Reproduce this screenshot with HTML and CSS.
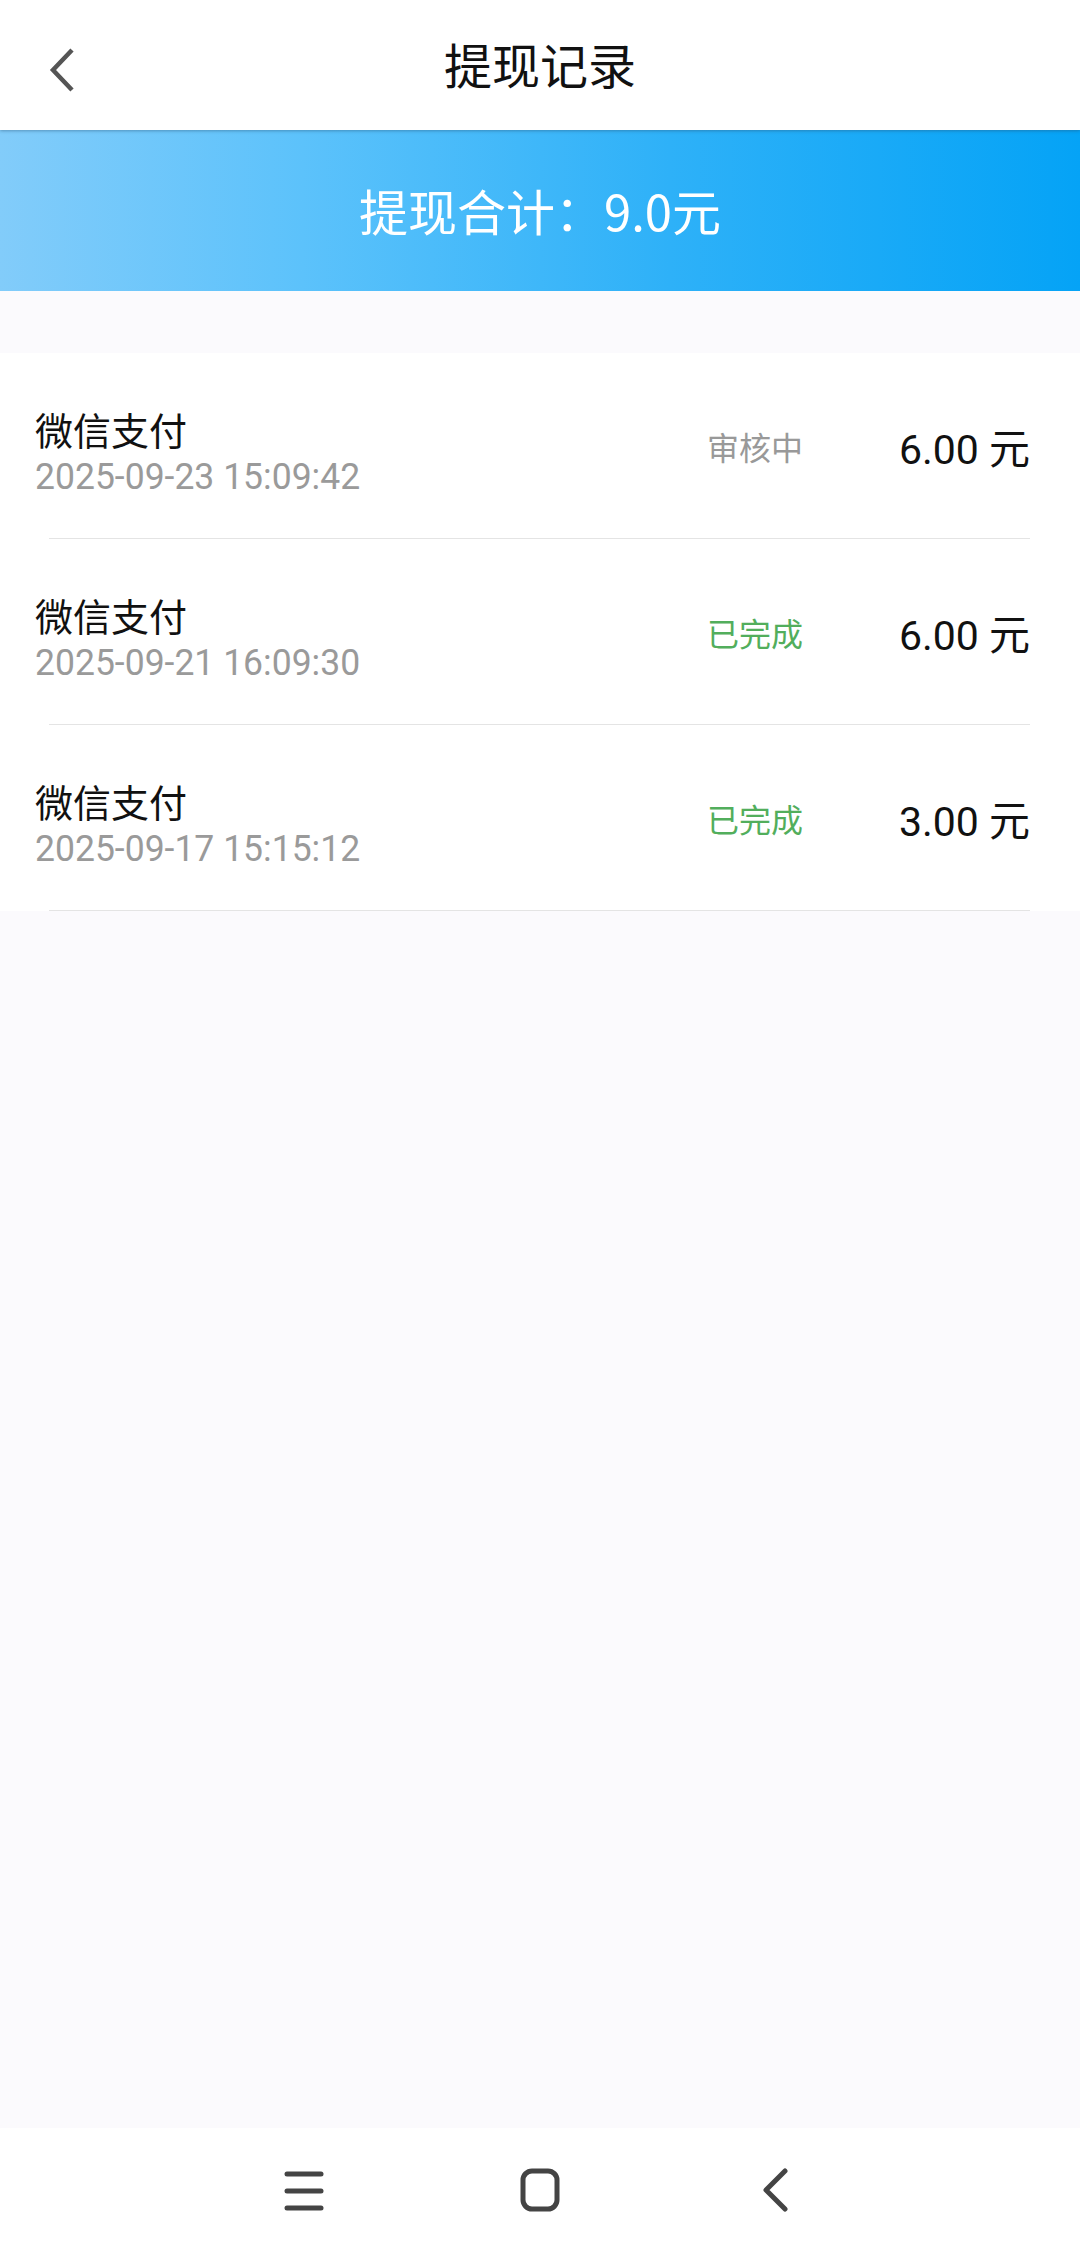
FILE: index.html
```html
<!DOCTYPE html>
<html lang="zh-CN">
<head>
<meta charset="utf-8">
<title>提现记录</title>
<link rel="stylesheet" href="styles.css">
</head>
<body>
<div class="page">
  <header class="topbar">
    <div class="back">
      <svg width="30" height="48" viewBox="0 0 30 48"><polyline points="24,4 5,24 24,44" fill="none" stroke="#555" stroke-width="4.5"/></svg>
    </div>
    <h1 class="title">提现记录</h1>
  </header>
  <section class="banner">提现合计：9.0元</section>
  <div class="spacer"></div>
  <ul class="list">
    <li class="item">
      <div class="row">
        <div class="info">
          <div class="name">微信支付</div>
          <div class="date"><span class="date-text">2025-09-23 15:09:42</span></div>
        </div>
        <div class="status pending">审核中</div>
        <div class="amount">6.00 元</div>
      </div>
      <div class="divider"></div>
    </li>
    <li class="item">
      <div class="row">
        <div class="info">
          <div class="name">微信支付</div>
          <div class="date"><span class="date-text">2025-09-21 16:09:30</span></div>
        </div>
        <div class="status done">已完成</div>
        <div class="amount">6.00 元</div>
      </div>
      <div class="divider"></div>
    </li>
    <li class="item">
      <div class="row">
        <div class="info">
          <div class="name">微信支付</div>
          <div class="date"><span class="date-text">2025-09-17 15:15:12</span></div>
        </div>
        <div class="status done">已完成</div>
        <div class="amount">3.00 元</div>
      </div>
      <div class="divider"></div>
    </li>
  </ul>
  <div class="filler"></div>
  <nav class="navbar">
    <div class="nav-slot">
      <svg width="44" height="44" viewBox="0 0 44 44"><g stroke="#444" stroke-width="5" stroke-linecap="round"><line x1="5" y1="5" x2="39" y2="5"/><line x1="5" y1="22" x2="39" y2="22"/><line x1="5" y1="39" x2="39" y2="39"/></g></svg>
    </div>
    <div class="nav-slot">
      <svg width="44" height="46" viewBox="0 0 44 46"><rect x="5" y="3" width="34" height="38" rx="9" fill="none" stroke="#444" stroke-width="5"/></svg>
    </div>
    <div class="nav-slot">
      <svg width="34" height="46" viewBox="0 0 34 46"><polyline points="26,3 7,22 26,41" fill="none" stroke="#444" stroke-width="5" stroke-linecap="round" stroke-linejoin="round"/></svg>
    </div>
  </nav>
</div>
</body>
</html>
```
FILE: styles.css
```css
* { box-sizing: border-box; }
html, body { margin: 0; padding: 0; }
body {
  width: 1080px;
  height: 2259px;
  background: #fbfafd;
  font-family: Roboto, "Noto Sans CJK SC", sans-serif;
  color: #111;
}
.page {
  display: flex;
  flex-direction: column;
  height: 2259px;
}
.topbar {
  height: 130px;
  background: #fff;
  display: flex;
  align-items: center;
  justify-content: center;
  position: relative;
  box-shadow: 0 1px 3px rgba(40, 80, 110, 0.45);
  z-index: 1;
}
.back {
  position: absolute;
  left: 48px;
  top: 46px;
  display: flex;
}
.title {
  margin: 0;
  font-family: "Noto Sans CJK SC", sans-serif;
  font-size: 48px;
  font-weight: 400;
  color: #111;
  line-height: 1;
  padding-bottom: 4px;
}
.banner {
  height: 161px;
  background: linear-gradient(90deg, #82ccfa 0%, #5cc2fb 28%, #2eb1f8 62%, #05a3f6 100%);
  color: #fff;
  font-family: "Noto Sans CJK SC", sans-serif;
  font-size: 49px;
  display: flex;
  align-items: center;
  justify-content: center;
  padding-bottom: 2px;
}
.spacer { height: 62px; }
.list {
  list-style: none;
  margin: 0;
  padding: 0;
  background: #fff;
}
.row {
  height: 185px;
  display: flex;
  align-items: center;
  padding: 0 50px 0 35px;
}
.info {
  flex: 1;
  padding-top: 14px;
}
.name {
  font-family: "Noto Sans CJK SC", sans-serif;
  font-size: 38px;
  line-height: 48px;
  color: #111;
}
.date {
  font-size: 37px;
  line-height: 48px;
  color: #9a9a9a;
  white-space: nowrap;
}
.date-text {
  display: inline-block;
  transform: scaleX(0.96);
  transform-origin: left center;
}
.status {
  width: 96px;
  font-family: "Noto Sans CJK SC", sans-serif;
  font-size: 32px;
  white-space: nowrap;
}
.status.pending { color: #999; }
.status.done { color: #52ae5c; }
.amount {
  width: 227px;
  text-align: right;
  font-size: 41px;
  color: #111;
  white-space: nowrap;
}
.divider {
  height: 1px;
  margin: 0 50px 0 49px;
  background: #e4e4e4;
}
.filler { flex: 1; }
.navbar {
  height: 131px;
  background: #fff;
  display: flex;
  align-items: center;
  justify-content: center;
  padding-bottom: 6px;
}
.nav-slot {
  width: 236px;
  display: flex;
  justify-content: center;
  align-items: center;
}
```
